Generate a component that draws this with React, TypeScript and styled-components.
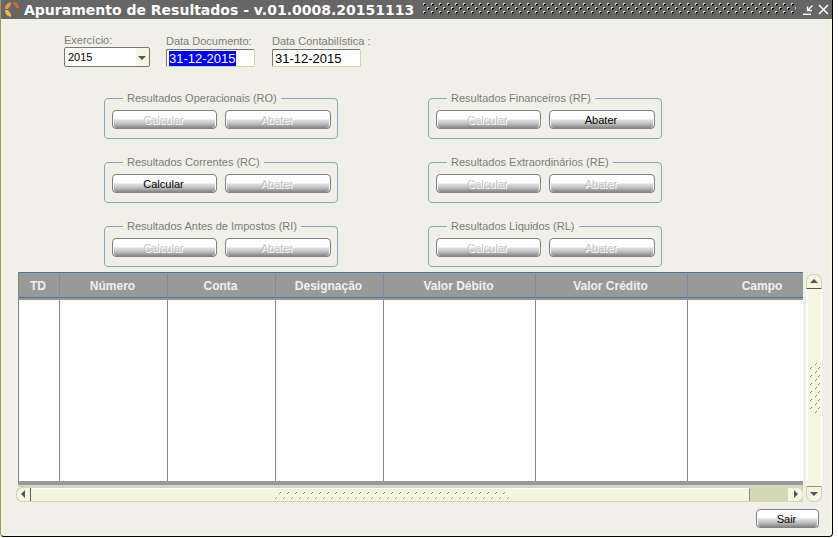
import React, { useEffect, useId, useRef } from "react";
import styled, { createGlobalStyle } from "styled-components";

const Global = createGlobalStyle`
  * { box-sizing: border-box; }
  body { margin: 0; background: #fff; font-family: "Liberation Sans", Arial, sans-serif; font-size: 11px; }
`;

const Window = styled.main`
  display: flex;
  flex-direction: column;
  margin-right: 5px;
  background: #f0efe8;
  border: 1px solid #000;
  border-top: 0;
  border-left-color: #9c9a60;
  border-radius: 0 0 4px 4px;
  box-shadow: inset -2px -2px 0 #f5f5e2, inset 2px 0 0 #f7f4e2;
`;

const TitleBar = styled.header`
  display: flex;
  align-items: center;
  height: 19px;
  padding-left: 3px;
  background: #666;
`;

const Title = styled.h1`
  margin: 0 9px 0 3px;
  color: #fff;
  font: bold 14px/18px "DejaVu Sans", Verdana, sans-serif;
  white-space: nowrap;
`;

const DragArea = styled.div`
  flex: 1;
  height: 13px;
  margin-right: 4px;
  overflow: hidden;
  svg { display: block; }
`;

const TitleButton = styled.button`
  width: 16px;
  height: 16px;
  padding: 0;
  border: 0;
  background: none;
  svg { display: block; margin: 0 auto; }
`;

const Filters = styled.form`
  display: flex;
  align-items: flex-end;
  padding: 14px 63px 0;
`;

const Field = styled.div<{ $gap: number }>`
  display: flex;
  flex-direction: column;
  margin-right: ${(p) => p.$gap}px;
`;

const Label = styled.label`
  color: #7c7c7c;
  line-height: 14px;
  white-space: nowrap;
`;

const SelectBox = styled.div`
  display: grid;
  width: 86px;
  height: 20px;
  border: 1px solid #77776c;
  border-radius: 2px;
  background: linear-gradient(90deg, #fff 71px, #f5f5e2 71px);
  align-items: center;
  > * { grid-area: 1 / 1; }
  svg { justify-self: end; margin-right: 2px; pointer-events: none; }
`;

const Select = styled.select`
  appearance: none;
  width: 100%;
  height: 18px;
  padding: 0 3px;
  border: 0;
  outline: 0;
  background: transparent;
  color: #000;
  font: 11px/16px "Liberation Sans", Arial, sans-serif;
`;

const DateInput = styled.input`
  width: 89px;
  height: 18px;
  margin-top: 1px;
  padding: 0 2px;
  border: 1px solid #d0d4a8;
  border-top-color: #77776c;
  border-left-color: #77776c;
  border-radius: 2px;
  outline: 0;
  background: #fff;
  caret-color: transparent;
  font: 13px/16px "Liberation Sans", Arial, sans-serif;
  &::selection { background: #00f; color: #fff; }
`;

const Groups = styled.section`
  display: grid;
  grid-template-columns: 234px 234px;
  column-gap: 90px;
  row-gap: 17px;
  padding: 25px 0 5px 103px;
`;

const Group = styled.fieldset`
  display: grid;
  grid-template-columns: 105px 106px;
  column-gap: 8px;
  min-width: 0;
  height: 47px;
  margin: 0;
  padding: 5px 7px 8px;
  border: 1px solid #8aa6c4;
  border-radius: 4px;
`;

const Legend = styled.legend`
  margin-left: 11px;
  padding: 0 4px;
  color: #7c7c7c;
  line-height: 13px;
  white-space: nowrap;
`;

const PushButton = styled.button`
  height: 19px;
  min-width: 63px;
  padding: 1px 2px 0 0;
  border: 1px solid #808080;
  border-radius: 4px;
  background: linear-gradient(#fff 0, #fff 45%, #dcdcdc 55%, #c8c8c8 70%, #858585 100%);
  box-shadow: inset 1px 0 0 #fff, inset -1px 0 0 #fff;
  color: #000;
  font: 11px/14px "Liberation Sans", Arial, sans-serif;
  &:disabled { color: #c6c6c6; text-shadow: 1px 1px 0 #fff; }
`;

const GridArea = styled.section`
  display: flex;
  padding: 0 10px 0 15px;
  gap: 3px;
`;

const GridColumn = styled.div`
  flex: 1;
  min-width: 0;
`;

const TableClip = styled.div`
  margin-left: 2px;
  overflow: hidden;
  border-bottom: 2px solid #d4d4d0;
`;

const Table = styled.table`
  width: calc(100% + 36px);
  table-layout: fixed;
  border-collapse: separate;
  border-spacing: 0;
  border-left: 1px solid #858585;
  border-bottom: 4px solid #999;
`;

const HeadCell = styled.th`
  height: 28px;
  padding: 0 2px 1px 0;
  border-top: 1px solid #4673a3;
  border-right: 1px solid #858b9b;
  background: linear-gradient(#999 24px, #4673a3 24px, #4673a3 25px, #999 25px);
  color: #f0f0f0;
  font: bold 12px/16px "Liberation Sans", Arial, sans-serif;
  text-align: center;
`;

const Cell = styled.td`
  height: 181px;
  padding: 0;
  background: #fff;
  border-right: 1px solid #858b9b;
`;

const HScroll = styled.div`
  display: flex;
  height: 15px;
  border: 1px solid #d0d6ae;
  border-right: 0;
  border-radius: 6px 0 0 6px;
  background: #d3d8b2;
`;

const Thumb = styled.div`
  flex: 1;
  display: flex;
  align-items: center;
  justify-content: center;
  padding-left: 6px;
  border-top: 1px solid #fff;
  border-right: 1px solid #8f9560;
  background: #f5f5e2;
`;

const ScrollButton = styled.button<{ $side: "left" | "right" | "up" | "down" }>`
  display: flex;
  align-items: center;
  justify-content: center;
  padding: 0;
  border: 0 solid #d0d6ae;
  background: #f5f5e2;
  ${(p) => p.$side === "left" && "width: 14px; border-right: 1px solid #555; border-radius: 6px 0 0 6px;"}
  ${(p) => p.$side === "right" && "width: 15px; margin-left: 38px; border-radius: 0 7px 7px 0;"}
  ${(p) => p.$side === "up" && "height: 15px; border-width: 1px; border-bottom-color: #555; border-radius: 7px 7px 0 0;"}
  ${(p) => p.$side === "down" && "height: 16px; border-width: 1px; border-top-color: #8f9560; border-radius: 0 0 7px 7px;"}
`;

const VScroll = styled.div`
  display: flex;
  flex-direction: column;
  width: 16px;
  margin-top: 2px;
`;

const VThumb = styled.div`
  flex: 1;
  display: flex;
  align-items: center;
  justify-content: flex-end;
  padding-right: 1px;
  border: solid #fff;
  border-width: 0 1px 0 2px;
  background: #f5f5e2;
`;

const Footer = styled.footer`
  display: flex;
  justify-content: flex-end;
  padding: 7px 13px 8px;
`;

const Arrow = ({ points }: { points: string }) => (
  <svg width="9" height="9" viewBox="0 0 9 9" aria-hidden="true">
    <polygon points={points} fill="#555" />
  </svg>
);

function TitleDots() {
  const id = useId();
  const dot = (x: number, y: number) => (
    <g>
      <rect x={x} y={y} width="2" height="2" fill="#d3d8b2" />
      <rect x={x + 2} y={y + 1} width="1" height="1" fill="#000" />
      <rect x={x + 1} y={y + 1} width="1" height="2" fill="#000" />
    </g>
  );
  return (
    <svg width="100%" height="13" shapeRendering="crispEdges" aria-hidden="true">
      <pattern id={id} width="8" height="8" patternUnits="userSpaceOnUse">
        {dot(0, 0)}
        {dot(4, 4)}
      </pattern>
      <rect width="100%" height="11" fill={`url(#${id})`} />
    </svg>
  );
}

function Grip({ width, height, vertical }: { width: number; height: number; vertical?: boolean }) {
  const id = useId();
  const dot = (x: number, y: number) => (
    <g>
      <path d={`M${x} ${y}h2v1h-1v1h-1z`} fill="#fff" />
      <path d={`M${x + 1} ${y + 1}h1v1h-1zM${x} ${y + 2}h1v1h-1z`} fill="#8f9560" />
    </g>
  );
  return (
    <svg width={width} height={height} shapeRendering="crispEdges" aria-hidden="true">
      <pattern id={id} width="8" height="8" patternUnits="userSpaceOnUse">
        {vertical ? dot(5, 0) : dot(4, 0)}
        {vertical ? dot(0, 4) : dot(0, 5)}
      </pattern>
      <rect width={width} height={height} fill={`url(#${id})`} />
    </svg>
  );
}

const Logo = () => (
  <svg width="17" height="17" viewBox="0 0 17 17" aria-hidden="true">
    <path d="M7 1v3L4 8H1C1 4 3 2 7 1z" fill="#e8964a" />
    <path d="M9 1c4 0 6 3 6 6h-3l-1-3-2-1z" fill="#e8622c" />
    <path d="M1 9h3l3 4v3C3 15 1 13 1 9z" fill="#e8b848" />
    <path d="M14 9h1c0 4-2 6-6 6v-1c3-1 4-2 5-5z" fill="#80603f" />
  </svg>
);

interface GroupData {
  title: string;
  calculate?: boolean;
  deduct?: boolean;
}

const groups: GroupData[] = [
  { title: "Resultados Operacionais (RO)" },
  { title: "Resultados Financeiros (RF)", deduct: true },
  { title: "Resultados Correntes (RC)", calculate: true },
  { title: "Resultados Extraordinários (RE)" },
  { title: "Resultados Antes de Impostos (RI)" },
  { title: "Resultados Liquidos (RL)" },
];

const columns = [
  { name: "TD", width: 41 },
  { name: "Número", width: 108 },
  { name: "Conta", width: 108 },
  { name: "Designação", width: 108 },
  { name: "Valor Débito", width: 152 },
  { name: "Valor Crédito", width: 152 },
  { name: "Campo", width: undefined },
];

export default function App() {
  const documentDate = useRef<HTMLInputElement>(null);
  useEffect(() => {
    documentDate.current?.focus();
    documentDate.current?.select();
  }, []);

  return (
    <>
      <Global />
      <Window>
        <TitleBar>
          <Logo />
          <Title>Apuramento de Resultados - v.01.0008.20151113</Title>
          <DragArea><TitleDots /></DragArea>
          <TitleButton aria-label="Minimizar">
            <svg width="12" height="12" viewBox="0 0 12 12">
              <path d="M10.500 1.500L6 6M5.500 2.500v4H10" stroke="#fff" strokeWidth="1.400" fill="none" />
              <path d="M1 9.500h8" stroke="#aaa" />
              <path d="M1 10.500h8" stroke="#fff" />
            </svg>
          </TitleButton>
          <TitleButton aria-label="Fechar">
            <svg width="12" height="12" viewBox="0 0 12 12">
              <path d="M1 1l9 9M10 1l-9 9" stroke="#fff" strokeWidth="1.500" />
            </svg>
          </TitleButton>
        </TitleBar>

        <Filters>
          <Field $gap={16}>
            <Label htmlFor="year">Exercício:</Label>
            <SelectBox>
              <Select id="year" defaultValue="2015"><option>2015</option></Select>
              <Arrow points="0,3 8,3 4,7" />
            </SelectBox>
          </Field>
          <Field $gap={17}>
            <Label htmlFor="docdate">Data Documento:</Label>
            <DateInput id="docdate" ref={documentDate} defaultValue="31-12-2015" />
          </Field>
          <Field $gap={0}>
            <Label htmlFor="accdate">Data Contabilística :</Label>
            <DateInput id="accdate" defaultValue="31-12-2015" />
          </Field>
        </Filters>

        <Groups>
          {groups.map((g) => (
            <Group key={g.title}>
              <Legend>{g.title}</Legend>
              <PushButton disabled={!g.calculate}>Calcular</PushButton>
              <PushButton disabled={!g.deduct}>Abater</PushButton>
            </Group>
          ))}
        </Groups>

        <GridArea>
          <GridColumn>
            <TableClip>
              <Table>
                <colgroup>
                  {columns.map((c) => <col key={c.name} width={c.width} />)}
                </colgroup>
                <thead>
                  <tr>{columns.map((c) => <HeadCell key={c.name} scope="col">{c.name}</HeadCell>)}</tr>
                </thead>
                <tbody>
                  <tr>{columns.map((c) => <Cell key={c.name} />)}</tr>
                </tbody>
              </Table>
            </TableClip>
            <HScroll>
              <ScrollButton $side="left" aria-label="Deslocar à esquerda"><Arrow points="6,0 6,8 2,4" /></ScrollButton>
              <Thumb><Grip width={236} height={8} /></Thumb>
              <ScrollButton $side="right" aria-label="Deslocar à direita"><Arrow points="3,0 3,8 7,4" /></ScrollButton>
            </HScroll>
          </GridColumn>
          <VScroll>
            <ScrollButton $side="up" aria-label="Deslocar para cima"><Arrow points="0,6 8,6 4,2" /></ScrollButton>
            <VThumb><Grip width={10} height={52} vertical /></VThumb>
            <ScrollButton $side="down" aria-label="Deslocar para baixo"><Arrow points="0,2 8,2 4,6" /></ScrollButton>
          </VScroll>
        </GridArea>

        <Footer><PushButton>Sair</PushButton></Footer>
      </Window>
    </>
  );
}
